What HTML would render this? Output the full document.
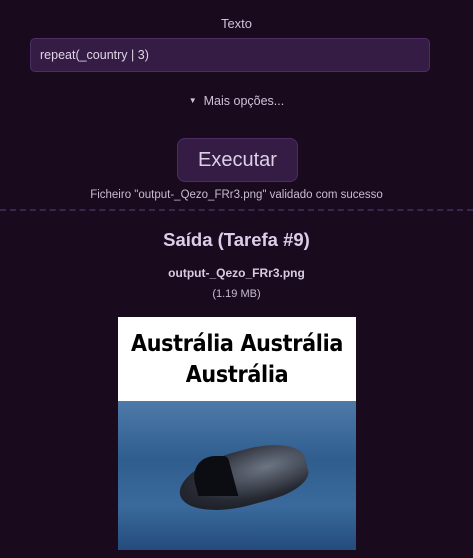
<!DOCTYPE html>
<html><head><meta charset="utf-8"><style>
html,body{margin:0;padding:0;width:473px;height:558px;overflow:hidden;background:#190a1e;font-family:"Liberation Sans",sans-serif;color:#d8c8e0}
.abs{position:absolute}
.lbl{left:0;width:473px;text-align:center;font-size:13px;top:16px;color:#cfc2d6}
.inp{left:30px;top:38px;width:400px;height:34px;background:#341c44;border:1px solid #4e2d66;border-radius:5px;box-sizing:border-box}
.inp span{position:absolute;left:9px;top:9px;font-size:12.5px;color:#e0d4e6}
.more{left:0;width:473px;text-align:center;top:94px;font-size:12.5px;color:#cfc2d6}
.btn{left:177px;top:138px;width:121px;height:44px;background:#341c44;border:1px solid #4e2d66;border-radius:8px;box-sizing:border-box;text-align:center;line-height:42px;font-size:20px;color:#ddd0e6}
.ok{left:0;width:473px;text-align:center;top:189px;font-size:11.5px;color:#c8bcd0}
.dash{left:0;top:209px;width:473px;height:0;border-top:2px dashed #3d2450}
.h{left:0;width:473px;text-align:center;top:229px;font-size:18.5px;font-weight:bold;color:#dccdea}
.fn{left:0;width:473px;text-align:center;top:266px;font-size:12px;font-weight:bold;color:#d8cce0}
.sz{left:0;width:473px;text-align:center;top:288px;font-size:11px;color:#c8bcd0}
.img{left:118px;top:317px;width:238px;height:233px;overflow:hidden}
.top{height:84px;background:#fff;color:#000;text-align:center;font-weight:bold;font-size:23px;line-height:31px;padding-top:12px;box-sizing:border-box;font-family:"DejaVu Sans Condensed","Liberation Sans Narrow",sans-serif;letter-spacing:-0.3px}
.sea{height:149px;background:linear-gradient(180deg,#4d7aa8 0%,#2f5d8e 40%,#3a6a9c 70%,#244c7c 100%);position:relative}
.whale{position:absolute;left:60px;top:50px;width:130px;height:55px;background:radial-gradient(ellipse at 70% 40%,#6c7584,#272a33 60%,#12141a);border-radius:60% 50% 40% 60%;transform:rotate(-15deg)}
.fin{position:absolute;left:75px;top:55px;width:40px;height:40px;background:#0c0d12;border-radius:70% 10% 0 0;transform:skewX(15deg)}
</style></head><body>
<div class="abs lbl">Texto</div>
<div class="abs inp"><span>repeat(_country | 3)</span></div>
<div class="abs more"><span style="font-size:8px;vertical-align:2px">▼</span>&nbsp; Mais opções...</div>
<div class="abs btn">Executar</div>
<div class="abs ok">Ficheiro "output-_Qezo_FRr3.png" validado com sucesso</div>
<div class="abs dash"></div>
<div class="abs h">Saída (Tarefa #9)</div>
<div class="abs fn">output-_Qezo_FRr3.png</div>
<div class="abs sz">(1.19 MB)</div>
<div class="abs img"><div class="top">Austrália Austrália<br>Austrália</div><div class="sea"><div class="whale"></div><div class="fin"></div></div></div>
</body></html>
